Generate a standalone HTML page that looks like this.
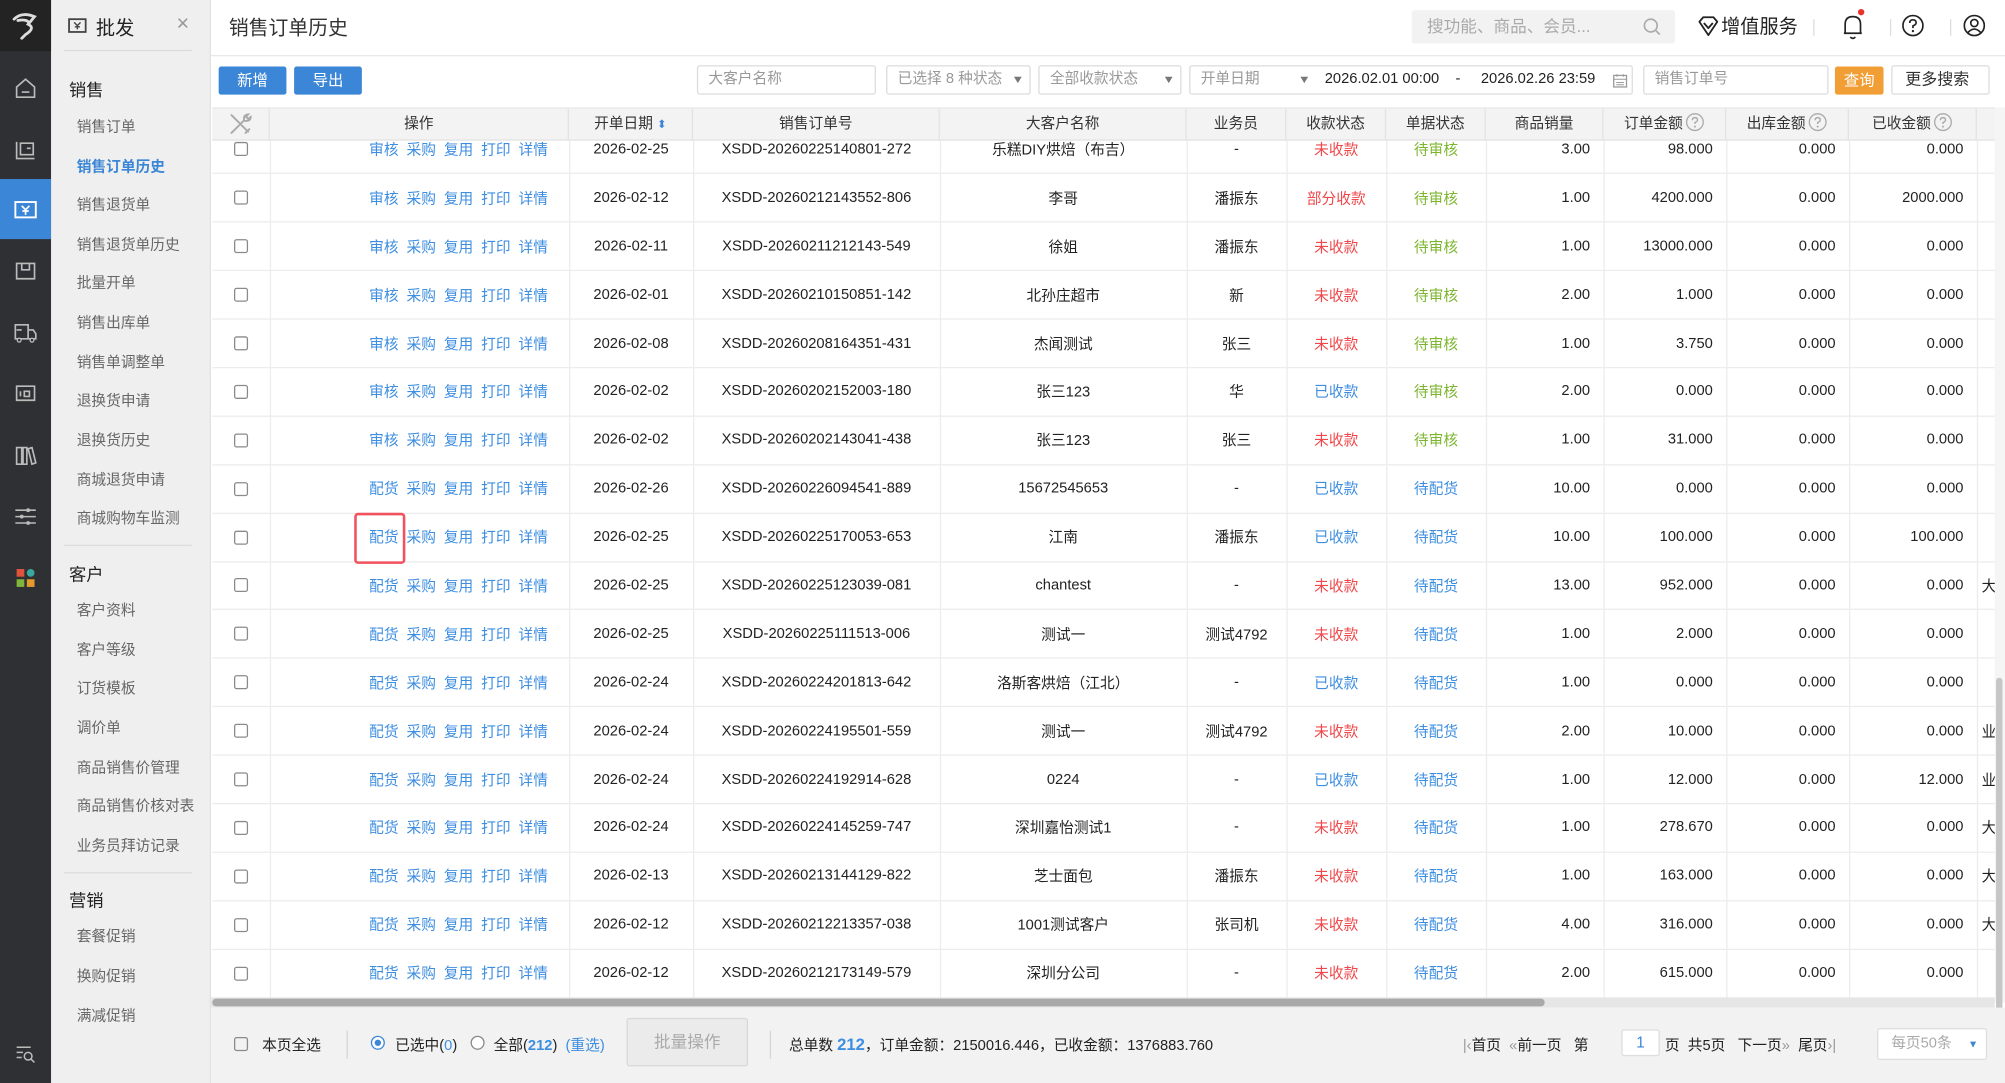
<!DOCTYPE html>
<html><head><meta charset="utf-8">
<style>
*{box-sizing:border-box;margin:0;padding:0}
html,body{width:2005px;height:1083px;overflow:hidden;background:#fff}
#w{position:absolute;left:0;top:0;width:1568px;height:847px;transform:scale(1.27870);transform-origin:0 0;font-family:"Liberation Sans","Noto Sans CJK SC",sans-serif;font-size:12px;color:#333}
.a{position:absolute}
#ib{left:0;top:0;width:40px;height:847px;background:#2f3033}
#ib .ic{position:absolute;left:0;width:40px;height:47px;display:flex;align-items:center;justify-content:center}
#sb{left:40px;top:0;width:125px;height:847px;background:#efefef;border-right:1px solid #e2e2e2}
#sb .s{position:absolute;left:14px;font-size:13.5px;color:#222}
#sb .i{position:absolute;left:20px;font-size:11.5px;color:#666}
#sb .hr{position:absolute;left:10px;width:100px;height:1px;background:#dcdcdc}
#hd{left:165px;top:0;width:1403px;height:44px;background:#fff;border-bottom:1px solid #e8e8e8}
.btn{position:absolute;top:52px;height:22px;border-radius:2px;color:#fff;font-size:12px;text-align:center;line-height:22px}
.inp{position:absolute;top:51px;height:23px;border:1px solid #dcdcdc;background:#fff;color:#999;font-size:11.5px;line-height:21px;padding-left:8px;border-radius:2px}
.tri{position:absolute;right:6px;top:8px;width:0;height:0;border-left:3.5px solid transparent;border-right:3.5px solid transparent;border-top:5px solid #777}
#th{left:166px;top:84px;width:1394px;height:26px;background:#f3f3f3;border-bottom:1px solid #e3e3e3;border-top:1px solid #e8e8e8}
#th div{position:absolute;top:0;height:25px;line-height:25px;text-align:center;border-right:1px solid #e3e3e3;font-size:11.5px;color:#333}
#th svg.q{vertical-align:-3px;margin-left:2px}
#clip{left:166px;top:110px;width:1394px;height:671px;overflow:hidden}
table{position:absolute;left:0;top:-12px;border-collapse:collapse;table-layout:fixed;width:1420px}
td{height:37.9px;border-bottom:1px solid #ececec;border-right:1px solid #ececec;text-align:center;font-size:11.5px;color:#222;white-space:nowrap;overflow:hidden;padding:0}
td.r{text-align:right;padding-right:10px}
td.op{text-align:right;padding-right:16px;color:#3d8ee0;word-spacing:3px}
.cb{display:inline-block;width:11px;height:11px;border:1px solid #8a8a8a;border-radius:2px;vertical-align:middle}
.red{color:#f0474a}.grn{color:#7db52f}.blu{color:#3d8ee0}
#ft{left:165px;top:788px;width:1403px;height:59px;background:#f2f2f2}
</style></head><body><div id="w">
<div class="a" id="ib">
 <div class="ic" style="top:0;height:40px;background:#232323"><svg width="24" height="22" viewBox="0 0 24 22"><path d="M3 6 Q9 0 19 4 L14 10 Q20 13 12 18 L9 21 M6 7 Q12 6 14 8" fill="none" stroke="#ddd" stroke-width="2.2" stroke-linecap="round"/></svg></div>
 <div class="ic" style="top:45px"><svg width="18" height="18" viewBox="0 0 18 18"><path d="M2 8 L9 2 L16 8 V16 H2 Z M6 12 H12" fill="none" stroke="#bbb" stroke-width="1.3"/></svg></div>
 <div class="ic" style="top:93px"><svg width="18" height="18" viewBox="0 0 18 18"><path d="M2 3 V16 H16 M5 4 H15 V13 H5 Z M10 8 H13" fill="none" stroke="#bbb" stroke-width="1.3"/></svg></div>
 <div class="ic" style="top:140px;background:#3b86d6"><svg width="18" height="14" viewBox="0 0 18 14"><rect x="1" y="1" width="16" height="12" fill="none" stroke="#fff" stroke-width="1.5"/><path d="M6 4 L9 7 L12 4 M9 7 V11 M6.5 8 H11.5" fill="none" stroke="#fff" stroke-width="1.3"/></svg></div>
 <div class="ic" style="top:188px"><svg width="18" height="18" viewBox="0 0 18 18"><path d="M2 3 H16 V15 H2 Z M6 3 V8 H12 V3" fill="none" stroke="#bbb" stroke-width="1.3"/></svg></div>
 <div class="ic" style="top:236px"><svg width="20" height="18" viewBox="0 0 20 18"><path d="M2 3 H12 V14 H2 Z M12 7 H16 L18 10 V14 H12 M3 7 H7" fill="none" stroke="#bbb" stroke-width="1.3"/><circle cx="5" cy="15" r="1.5" fill="#2f3033" stroke="#bbb"/><circle cx="15" cy="15" r="1.5" fill="#2f3033" stroke="#bbb"/></svg></div>
 <div class="ic" style="top:284px"><svg width="18" height="16" viewBox="0 0 18 16"><path d="M2 2 H16 V13 H2 Z M5 6 V10 M8 6 H12 V10 H8 Z" fill="none" stroke="#bbb" stroke-width="1.3"/></svg></div>
 <div class="ic" style="top:332px"><svg width="18" height="18" viewBox="0 0 18 18"><path d="M2 3 H6 V16 H2 Z M7 3 H10 V16 H7 Z M11 4 L14 3 L17 15 L14 16 Z" fill="none" stroke="#bbb" stroke-width="1.3"/></svg></div>
 <div class="ic" style="top:380px"><svg width="18" height="16" viewBox="0 0 18 16"><path d="M1 3 H17 M1 8 H17 M1 13 H17" stroke="#bbb" stroke-width="1.2"/><circle cx="11" cy="3" r="1.5" fill="#bbb"/><circle cx="6" cy="8" r="1.5" fill="#bbb"/><circle cx="11" cy="13" r="1.5" fill="#bbb"/></svg></div>
 <div class="ic" style="top:428px"><svg width="16" height="16" viewBox="0 0 16 16"><rect x="1" y="1" width="6" height="6" fill="#e0533b"/><circle cx="12" cy="4" r="3" fill="#3aa7a0"/><rect x="1" y="9" width="6" height="6" fill="#7fb53a"/><rect x="9" y="9" width="6" height="6" fill="#e59a2c"/></svg></div>
 <div class="ic" style="top:800px"><svg width="16" height="14" viewBox="0 0 16 14"><path d="M1 2 H12 M1 6 H6 M1 10 H5" stroke="#bbb" stroke-width="1.2"/><circle cx="10" cy="9" r="3" fill="none" stroke="#bbb" stroke-width="1.2"/><path d="M12 11 L15 14" stroke="#bbb" stroke-width="1.2"/></svg></div>
</div>
<div class="a" id="sb">
 <svg class="a" style="left:13px;top:14px" width="15" height="12" viewBox="0 0 15 12"><rect x="1" y="1" width="13" height="10" fill="none" stroke="#444" stroke-width="1.4"/><path d="M5 3.5 L7.5 6 L10 3.5 M7.5 6 V9 M5.5 7 H9.5" fill="none" stroke="#444" stroke-width="1.1"/></svg>
 <div class="a" style="left:35px;top:11px;font-size:15px;color:#222">批发</div>
 <div class="a" style="left:98px;top:9px;font-size:17px;color:#999">×</div>
 <div class="hr" style="top:39px"></div>
 <div class="s" style="top:59px">销售</div>
 <div class="i" style="top:91px">销售订单</div>
 <div class="i" style="top:122px;color:#3b86d6;font-weight:bold">销售订单历史</div>
 <div class="i" style="top:152px">销售退货单</div>
 <div class="i" style="top:183px">销售退货单历史</div>
 <div class="i" style="top:213px">批量开单</div>
 <div class="i" style="top:244px">销售出库单</div>
 <div class="i" style="top:275px">销售单调整单</div>
 <div class="i" style="top:305px">退换货申请</div>
 <div class="i" style="top:336px">退换货历史</div>
 <div class="i" style="top:367px">商城退货申请</div>
 <div class="i" style="top:397px">商城购物车监测</div>
 <div class="hr" style="top:426px"></div>
 <div class="s" style="top:438px">客户</div>
 <div class="i" style="top:469px">客户资料</div>
 <div class="i" style="top:500px">客户等级</div>
 <div class="i" style="top:530px">订货模板</div>
 <div class="i" style="top:561px">调价单</div>
 <div class="i" style="top:592px">商品销售价管理</div>
 <div class="i" style="top:622px">商品销售价核对表</div>
 <div class="i" style="top:653px">业务员拜访记录</div>
 <div class="hr" style="top:682px"></div>
 <div class="s" style="top:693px">营销</div>
 <div class="i" style="top:724px">套餐促销</div>
 <div class="i" style="top:755px">换购促销</div>
 <div class="i" style="top:786px">满减促销</div>
</div>
<div class="a" id="hd">
 <div class="a" style="left:14px;top:10px;font-size:15.5px;color:#333">销售订单历史</div>
 <div class="a" style="left:939px;top:8px;width:206px;height:26px;background:#f2f2f2;border-radius:2px;color:#aaa;font-size:13px;line-height:26px;padding-left:12px">搜功能、商品、会员...</div>
 <svg class="a" style="left:1119px;top:13px" width="16" height="16" viewBox="0 0 16 16"><circle cx="7" cy="7" r="5" fill="none" stroke="#aaa" stroke-width="1.3"/><path d="M11 11 L14 14" stroke="#aaa" stroke-width="1.3"/></svg>
 <svg class="a" style="left:1162px;top:12px" width="18" height="17" viewBox="0 0 18 17"><path d="M2 5 L5 1.5 H13 L16 5 L9 15.5 Z M5.5 6 L9 10 L12.5 6" fill="none" stroke="#222" stroke-width="1.4" stroke-linejoin="round"/></svg>
 <div class="a" style="left:1181px;top:10px;font-size:15px;color:#222">增值服务</div>
 <div class="a" style="left:1253px;top:15px;width:1px;height:13px;background:#ddd"></div>
 <svg class="a" style="left:1275px;top:10px" width="18" height="22" viewBox="0 0 18 22"><path d="M3 16 V9 Q3 3 9 3 Q15 3 15 9 V16 H2 H16 M7 19 Q9 21 11 19" fill="none" stroke="#222" stroke-width="1.3"/></svg>
 <div class="a" style="left:1288px;top:7px;width:5px;height:5px;border-radius:50%;background:#e8322e"></div>
 <div class="a" style="left:1313px;top:15px;width:1px;height:13px;background:#ddd"></div>
 <svg class="a" style="left:1322px;top:11px" width="18" height="18" viewBox="0 0 18 18"><circle cx="9" cy="9" r="7.8" fill="none" stroke="#222" stroke-width="1.3"/><path d="M6.5 7 Q6.5 4.5 9 4.5 Q11.5 4.5 11.5 6.8 Q11.5 8.3 9 9.3 V11" fill="none" stroke="#222" stroke-width="1.3"/><circle cx="9" cy="13.3" r="0.9" fill="#222"/></svg>
 <div class="a" style="left:1360px;top:15px;width:1px;height:13px;background:#ddd"></div>
 <svg class="a" style="left:1370px;top:11px" width="18" height="18" viewBox="0 0 18 18"><circle cx="9" cy="9" r="7.8" fill="none" stroke="#222" stroke-width="1.3"/><circle cx="9" cy="7" r="2.8" fill="none" stroke="#222" stroke-width="1.3"/><path d="M4 14.5 Q9 9 14 14.5" fill="none" stroke="#222" stroke-width="1.3"/></svg>
</div>
<div class="btn" style="left:171px;width:53px;background:#3b86d6">新增</div>
<div class="btn" style="left:230px;width:53px;background:#3b86d6">导出</div>
<div class="inp" style="left:545px;width:140px">大客户名称</div>
<div class="inp" style="left:693px;width:113px">已选择 8 种状态<span class="tri"></span></div>
<div class="inp" style="left:812px;width:112px">全部收款状态<span class="tri"></span></div>
<div class="inp" style="left:930px;width:347px">开单日期<span class="tri" style="right:auto;left:86px"></span><span class="a" style="left:105px;top:0;color:#222">2026.02.01 00:00 &nbsp; &nbsp;- &nbsp; &nbsp; 2026.02.26 23:59</span>
 <svg class="a" style="left:330px;top:5px" width="12" height="12" viewBox="0 0 12 12"><rect x="1" y="2" width="10" height="9" fill="none" stroke="#999"/><path d="M1 5 H11 M3.5 1 V3 M8.5 1 V3 M3 7.5 H9 M3 9.3 H9" stroke="#999" stroke-width="0.8"/></svg></div>
<div class="inp" style="left:1285px;width:145px">销售订单号</div>
<div class="btn" style="left:1435px;width:38px;background:#f19f34">查询</div>
<div class="inp" style="left:1479px;width:77px;color:#333;font-size:12.5px;padding-left:10px">更多搜索</div>
<div class="a" style="left:1560px;top:84px;width:8px;height:700px;background:#f5f5f5"></div>
<div class="a" style="left:1561px;top:530px;width:5px;height:270px;background:#c6c6c6;border-radius:3px"></div>
<div class="a" id="th">
 <div style="left:0;width:45px"><svg style="margin-top:3px" width="20" height="19" viewBox="0 0 20 19"><path d="M3 16 L13 6 M4 3 L16 15 M13 6 Q12 2 16 1.5 L14.5 3.5 L16 5 L18 3.5 Q18 7 13.5 6.5 M3 2 L6 5 M14 16 L17 13" fill="none" stroke="#aaa" stroke-width="1.5" stroke-linecap="round"/></svg></div>
 <div style="left:45px;width:234px">操作</div>
 <div style="left:279px;width:97px">开单日期 <span style="color:#3b86d6;font-size:9px">⬍</span></div>
 <div style="left:376px;width:193px">销售订单号</div>
 <div style="left:569px;width:193px">大客户名称</div>
 <div style="left:762px;width:78px">业务员</div>
 <div style="left:840px;width:78px">收款状态</div>
 <div style="left:918px;width:78px">单据状态</div>
 <div style="left:996px;width:92px">商品销量</div>
 <div style="left:1088px;width:96px">订单金额<svg class="q" width="15" height="15" viewBox="0 0 15 15"><circle cx="7.5" cy="7.5" r="6.5" fill="none" stroke="#aaa" stroke-width="1"/><path d="M5.5 6 Q5.5 4 7.5 4 Q9.5 4 9.5 5.8 Q9.5 7 7.5 7.8 V9" fill="none" stroke="#aaa" stroke-width="1.1"/><circle cx="7.5" cy="11" r="0.8" fill="#aaa"/></svg></div>
 <div style="left:1184px;width:96px">出库金额<svg class="q" width="15" height="15" viewBox="0 0 15 15"><circle cx="7.5" cy="7.5" r="6.5" fill="none" stroke="#aaa" stroke-width="1"/><path d="M5.5 6 Q5.5 4 7.5 4 Q9.5 4 9.5 5.8 Q9.5 7 7.5 7.8 V9" fill="none" stroke="#aaa" stroke-width="1.1"/><circle cx="7.5" cy="11" r="0.8" fill="#aaa"/></svg></div>
 <div style="left:1280px;width:100px">已收金额<svg class="q" width="15" height="15" viewBox="0 0 15 15"><circle cx="7.5" cy="7.5" r="6.5" fill="none" stroke="#aaa" stroke-width="1"/><path d="M5.5 6 Q5.5 4 7.5 4 Q9.5 4 9.5 5.8 Q9.5 7 7.5 7.8 V9" fill="none" stroke="#aaa" stroke-width="1.1"/><circle cx="7.5" cy="11" r="0.8" fill="#aaa"/></svg></div>
</div>
<div class="a" id="clip"><table>
<colgroup><col style="width:45px"><col style="width:234px"><col style="width:97px"><col style="width:193px"><col style="width:193px"><col style="width:78px"><col style="width:78px"><col style="width:78px"><col style="width:92px"><col style="width:96px"><col style="width:96px"><col style="width:100px"><col style="width:40px"></colgroup>
<tr><td><span class="cb"></span></td><td class="op">审核 采购 复用 打印 详情</td><td>2026-02-25</td><td>XSDD-20260225140801-272</td><td>乐糕DIY烘焙（布吉）</td><td>-</td><td class="red">未收款</td><td class="grn">待审核</td><td class="r">3.00</td><td class="r">98.000</td><td class="r">0.000</td><td class="r">0.000</td><td></td></tr>
<tr><td><span class="cb"></span></td><td class="op">审核 采购 复用 打印 详情</td><td>2026-02-12</td><td>XSDD-20260212143552-806</td><td>李哥</td><td>潘振东</td><td class="red">部分收款</td><td class="grn">待审核</td><td class="r">1.00</td><td class="r">4200.000</td><td class="r">0.000</td><td class="r">2000.000</td><td></td></tr>
<tr><td><span class="cb"></span></td><td class="op">审核 采购 复用 打印 详情</td><td>2026-02-11</td><td>XSDD-20260211212143-549</td><td>徐姐</td><td>潘振东</td><td class="red">未收款</td><td class="grn">待审核</td><td class="r">1.00</td><td class="r">13000.000</td><td class="r">0.000</td><td class="r">0.000</td><td></td></tr>
<tr><td><span class="cb"></span></td><td class="op">审核 采购 复用 打印 详情</td><td>2026-02-01</td><td>XSDD-20260210150851-142</td><td>北孙庄超市</td><td>新</td><td class="red">未收款</td><td class="grn">待审核</td><td class="r">2.00</td><td class="r">1.000</td><td class="r">0.000</td><td class="r">0.000</td><td></td></tr>
<tr><td><span class="cb"></span></td><td class="op">审核 采购 复用 打印 详情</td><td>2026-02-08</td><td>XSDD-20260208164351-431</td><td>杰闻测试</td><td>张三</td><td class="red">未收款</td><td class="grn">待审核</td><td class="r">1.00</td><td class="r">3.750</td><td class="r">0.000</td><td class="r">0.000</td><td></td></tr>
<tr><td><span class="cb"></span></td><td class="op">审核 采购 复用 打印 详情</td><td>2026-02-02</td><td>XSDD-20260202152003-180</td><td>张三123</td><td>华</td><td class="blu">已收款</td><td class="grn">待审核</td><td class="r">2.00</td><td class="r">0.000</td><td class="r">0.000</td><td class="r">0.000</td><td></td></tr>
<tr><td><span class="cb"></span></td><td class="op">审核 采购 复用 打印 详情</td><td>2026-02-02</td><td>XSDD-20260202143041-438</td><td>张三123</td><td>张三</td><td class="red">未收款</td><td class="grn">待审核</td><td class="r">1.00</td><td class="r">31.000</td><td class="r">0.000</td><td class="r">0.000</td><td></td></tr>
<tr><td><span class="cb"></span></td><td class="op">配货 采购 复用 打印 详情</td><td>2026-02-26</td><td>XSDD-20260226094541-889</td><td>15672545653</td><td>-</td><td class="blu">已收款</td><td class="blu">待配货</td><td class="r">10.00</td><td class="r">0.000</td><td class="r">0.000</td><td class="r">0.000</td><td></td></tr>
<tr><td><span class="cb"></span></td><td class="op">配货 采购 复用 打印 详情</td><td>2026-02-25</td><td>XSDD-20260225170053-653</td><td>江南</td><td>潘振东</td><td class="blu">已收款</td><td class="blu">待配货</td><td class="r">10.00</td><td class="r">100.000</td><td class="r">0.000</td><td class="r">100.000</td><td></td></tr>
<tr><td><span class="cb"></span></td><td class="op">配货 采购 复用 打印 详情</td><td>2026-02-25</td><td>XSDD-20260225123039-081</td><td>chantest</td><td>-</td><td class="red">未收款</td><td class="blu">待配货</td><td class="r">13.00</td><td class="r">952.000</td><td class="r">0.000</td><td class="r">0.000</td><td style="text-align:left">&nbsp;大</td></tr>
<tr><td><span class="cb"></span></td><td class="op">配货 采购 复用 打印 详情</td><td>2026-02-25</td><td>XSDD-20260225111513-006</td><td>测试一</td><td>测试4792</td><td class="red">未收款</td><td class="blu">待配货</td><td class="r">1.00</td><td class="r">2.000</td><td class="r">0.000</td><td class="r">0.000</td><td></td></tr>
<tr><td><span class="cb"></span></td><td class="op">配货 采购 复用 打印 详情</td><td>2026-02-24</td><td>XSDD-20260224201813-642</td><td>洛斯客烘焙（江北）</td><td>-</td><td class="blu">已收款</td><td class="blu">待配货</td><td class="r">1.00</td><td class="r">0.000</td><td class="r">0.000</td><td class="r">0.000</td><td></td></tr>
<tr><td><span class="cb"></span></td><td class="op">配货 采购 复用 打印 详情</td><td>2026-02-24</td><td>XSDD-20260224195501-559</td><td>测试一</td><td>测试4792</td><td class="red">未收款</td><td class="blu">待配货</td><td class="r">2.00</td><td class="r">10.000</td><td class="r">0.000</td><td class="r">0.000</td><td style="text-align:left">&nbsp;业</td></tr>
<tr><td><span class="cb"></span></td><td class="op">配货 采购 复用 打印 详情</td><td>2026-02-24</td><td>XSDD-20260224192914-628</td><td>0224</td><td>-</td><td class="blu">已收款</td><td class="blu">待配货</td><td class="r">1.00</td><td class="r">12.000</td><td class="r">0.000</td><td class="r">12.000</td><td style="text-align:left">&nbsp;业</td></tr>
<tr><td><span class="cb"></span></td><td class="op">配货 采购 复用 打印 详情</td><td>2026-02-24</td><td>XSDD-20260224145259-747</td><td>深圳嘉怡测试1</td><td>-</td><td class="red">未收款</td><td class="blu">待配货</td><td class="r">1.00</td><td class="r">278.670</td><td class="r">0.000</td><td class="r">0.000</td><td style="text-align:left">&nbsp;大</td></tr>
<tr><td><span class="cb"></span></td><td class="op">配货 采购 复用 打印 详情</td><td>2026-02-13</td><td>XSDD-20260213144129-822</td><td>芝士面包</td><td>潘振东</td><td class="red">未收款</td><td class="blu">待配货</td><td class="r">1.00</td><td class="r">163.000</td><td class="r">0.000</td><td class="r">0.000</td><td style="text-align:left">&nbsp;大</td></tr>
<tr><td><span class="cb"></span></td><td class="op">配货 采购 复用 打印 详情</td><td>2026-02-12</td><td>XSDD-20260212213357-038</td><td>1001测试客户</td><td>张司机</td><td class="red">未收款</td><td class="blu">待配货</td><td class="r">4.00</td><td class="r">316.000</td><td class="r">0.000</td><td class="r">0.000</td><td style="text-align:left">&nbsp;大</td></tr>
<tr><td><span class="cb"></span></td><td class="op">配货 采购 复用 打印 详情</td><td>2026-02-12</td><td>XSDD-20260212173149-579</td><td>深圳分公司</td><td>-</td><td class="red">未收款</td><td class="blu">待配货</td><td class="r">2.00</td><td class="r">615.000</td><td class="r">0.000</td><td class="r">0.000</td><td></td></tr>
</table>
<div class="a" style="left:111px;top:291px;width:40px;height:40px;border:2px solid #f0525e;border-radius:3px"></div>
</div>
<div class="a" style="left:165px;top:780px;width:1395px;height:8px;background:#e6e6e6"></div>
<div class="a" style="left:166px;top:781px;width:1042px;height:6px;background:#a9a9a9;border-radius:3px"></div>
<div class="a" id="ft">
 <span class="cb a" style="left:18px;top:23px"></span>
 <div class="a" style="left:40px;top:21px;font-size:11.5px;color:#222">本页全选</div>
 <div class="a" style="left:106px;top:18px;width:1px;height:22px;background:#d5d5d5"></div>
 <div class="a" style="left:125px;top:22px;width:11px;height:11px;border-radius:50%;border:1px solid #3b86d6;background:#fff"><div class="a" style="left:2px;top:2px;width:5px;height:5px;border-radius:50%;background:#3b86d6"></div></div>
 <div class="a" style="left:144px;top:21px;font-size:11.5px;color:#222">已选中(<span class="blu">0</span>)</div>
 <div class="a" style="left:203px;top:22px;width:11px;height:11px;border-radius:50%;border:1px solid #888;background:#fff"></div>
 <div class="a" style="left:221px;top:21px;font-size:11.5px;color:#222">全部(<b class="blu">212</b>) &nbsp;<span class="blu">(重选)</span></div>
 <div class="a" style="left:325px;top:8px;width:95px;height:38px;background:#ebebeb;border:1px solid #d8d8d8;border-radius:2px;color:#aaa;font-size:13px;line-height:36px;text-align:center">批量操作</div>
 <div class="a" style="left:437px;top:18px;width:1px;height:22px;background:#d5d5d5"></div>
 <div class="a" style="left:452px;top:21px;font-size:11.5px;color:#222">总单数 <b class="blu" style="font-size:13px">212</b>，订单金额：2150016.446，已收金额：1376883.760</div>
 <div class="a" style="left:979px;top:21px;font-size:11.5px;color:#222"><span style="color:#999">|‹</span>首页 &nbsp;<span style="color:#999">«</span>前一页 &nbsp; 第</div>
 <div class="a" style="left:1103px;top:17px;width:30px;height:21px;background:#fff;border:1px solid #ddd;border-radius:2px;text-align:center;line-height:19px;color:#3b86d6">1</div>
 <div class="a" style="left:1137px;top:21px;font-size:11.5px;color:#222">页 &nbsp;共5页 &nbsp; 下一页<span style="color:#999">»</span> &nbsp;尾页<span style="color:#999">›|</span></div>
 <div class="a" style="left:1303px;top:16px;width:86px;height:25px;background:#fff;border:1px solid #ddd;border-radius:2px;color:#aaa;font-size:11.5px;line-height:23px;padding-left:10px">每页50条<span class="a" style="right:6px;top:0;color:#3b86d6;font-size:8px">▼</span></div>
</div>
</div></body></html>
